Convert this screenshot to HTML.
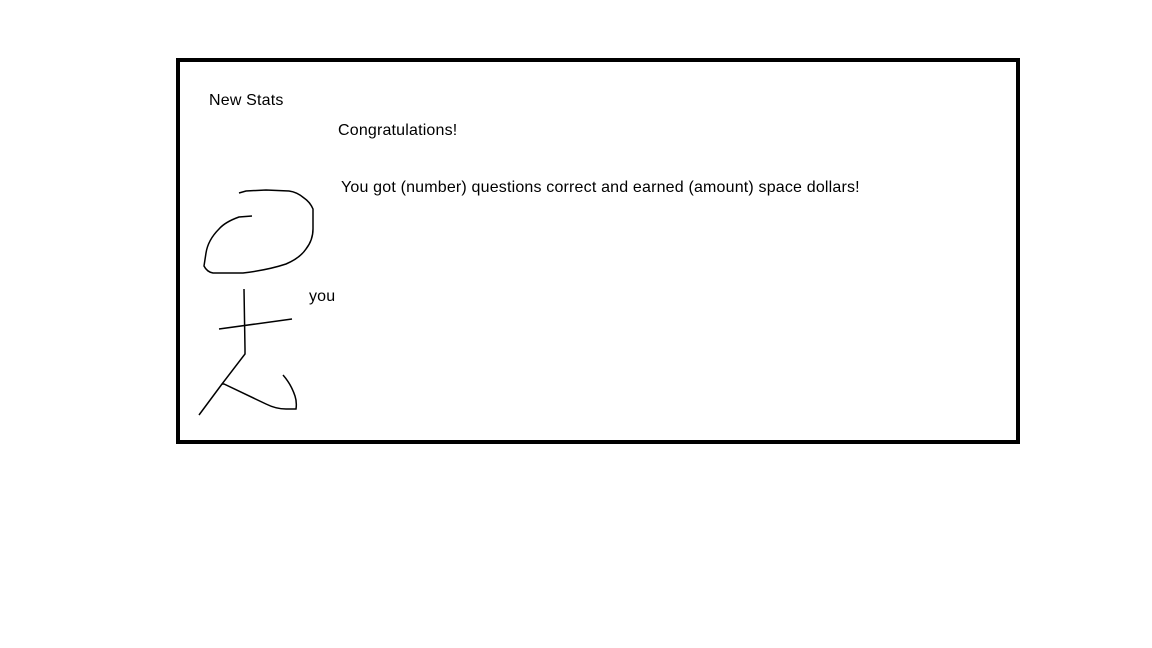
<!DOCTYPE html>
<html><head><style>
html,body{margin:0;padding:0;background:#fff;width:1152px;height:648px;overflow:hidden;font-family:"Liberation Sans",sans-serif;}
.box{position:absolute;left:176px;top:58px;width:836px;height:378px;border:4px solid #000;}
.t{position:absolute;font-size:16px;letter-spacing:0.18px;color:#000;white-space:nowrap;}
</style></head><body>
<div class="box"></div>
<div class="t" style="left:209px;top:92px">New Stats</div>
<div class="t" style="left:338px;top:122px">Congratulations!</div>
<div class="t" style="left:341px;top:179px">You got (number) questions correct and earned (amount) space dollars!</div>
<div class="t" style="left:309px;top:288px">you</div>
<svg width="1152" height="648" style="position:absolute;left:0;top:0" fill="none" stroke="#000" stroke-width="1.5">
<path d="M252,216 L239,217 Q225,222 219,229 Q208,240 206,253 L204,266 Q207,272 213,273 L243,273 Q268,270 286,264 Q300,258 306,249 Q313,240 313,229 L313,209 Q310,202 304,198 Q297,192 289,191 L266,190 L246,191 L239,193"/>
<path d="M244,289 L245,349 L245,354 L222,384 L199,415"/>
<path d="M219,329 L292,319"/>
<path d="M222,384 L224,384 L266,404 Q276,409 286,409 L296,409 Q297,402 295,396 Q291,384 283,375"/>
</svg>
</body></html>
